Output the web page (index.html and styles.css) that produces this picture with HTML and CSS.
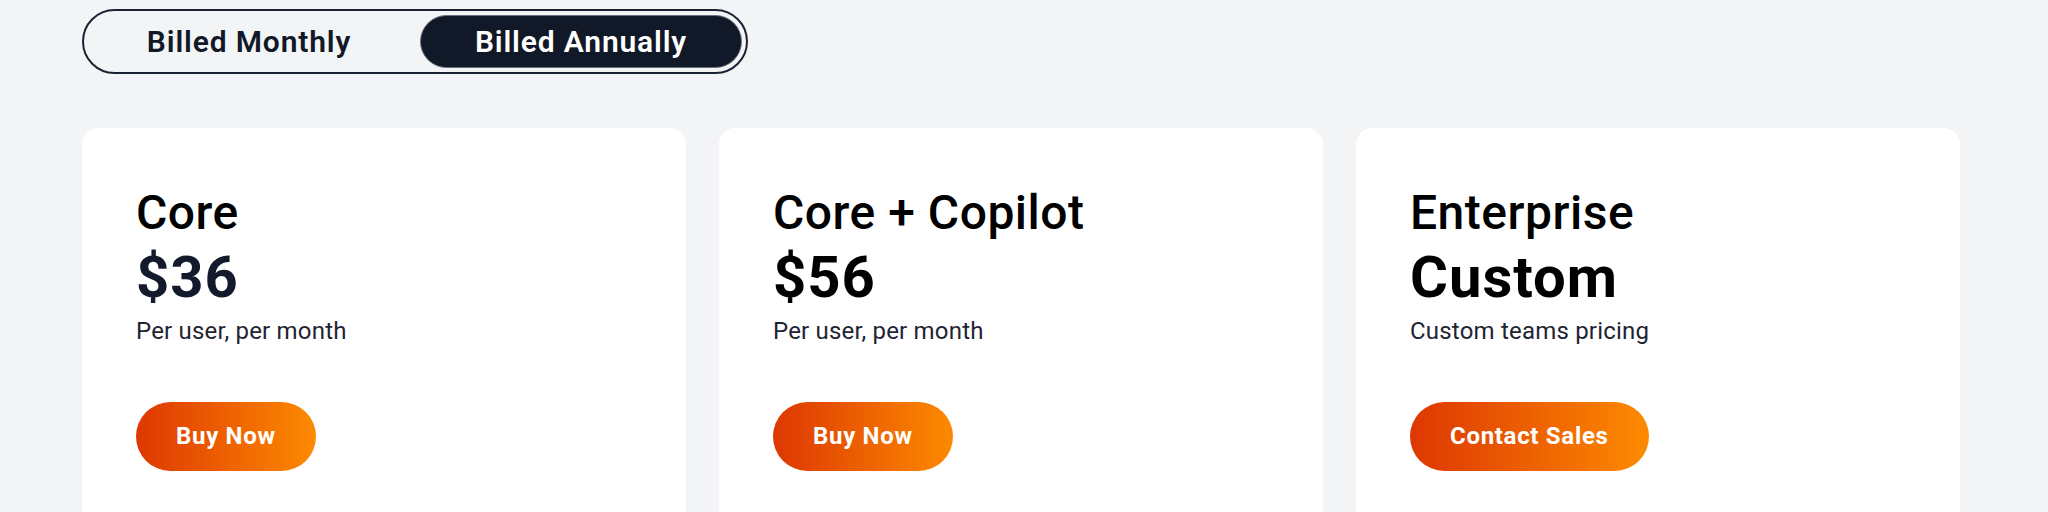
FILE: index.html
```html
<!DOCTYPE html>
<html lang="en">
<head>
<meta charset="utf-8">
<title>Pricing</title>
<link rel="stylesheet" href="styles.css">
</head>
<body>
<main class="page">
  <div class="toggle">
    <button class="toggle-btn">Billed Monthly</button>
    <button class="toggle-btn active">Billed Annually</button>
  </div>
  <section class="cards">
    <article class="card">
      <h2 class="plan">Core</h2>
      <div class="price navy">$36</div>
      <p class="note">Per user, per month</p>
      <a class="cta">Buy Now</a>
    </article>
    <article class="card">
      <h2 class="plan">Core + Copilot</h2>
      <div class="price">$56</div>
      <p class="note">Per user, per month</p>
      <a class="cta">Buy Now</a>
    </article>
    <article class="card">
      <h2 class="plan">Enterprise</h2>
      <div class="price">Custom</div>
      <p class="note">Custom teams pricing</p>
      <a class="cta">Contact Sales</a>
    </article>
  </section>
</main>
</body>
</html>
```
FILE: styles.css
```css
* { box-sizing: border-box; }
html, body {
  margin: 0;
  background: #f3f4f6;
  font-family: Roboto, "Liberation Sans", sans-serif;
  color: #111827;
}
.page {
  padding: 9px 0 0 82px;
}
.toggle {
  display: flex;
  gap: 10px;
  width: 666px;
  padding: 4px;
  border: 2px solid #1a2233;
  border-radius: 999px;
}
.toggle-btn {
  width: 322px;
  height: 53px;
  border: 1px solid transparent;
  border-radius: 999px;
  background: transparent;
  font-family: inherit;
  font-size: 30px;
  font-weight: 600;
  letter-spacing: 0.85px;
  color: #111827;
  padding: 0;
}
.toggle-btn.active {
  background: #111827;
  color: #ffffff;
  border-color: #6b7280;
}
.cards {
  display: grid;
  grid-template-columns: repeat(3, 604px);
  gap: 33px;
  margin-top: 54px;
}
.card {
  background: #ffffff;
  border-radius: 16px;
  padding: 56px 54px 60px;
  height: 420px;
}
.plan {
  margin: 0;
  font-size: 48px;
  line-height: 57.6px;
  font-weight: 500;
  letter-spacing: 0.5px;
  color: #000;
}
.price {
  margin-top: 3px;
  font-size: 58px;
  line-height: 64px;
  font-weight: 700;
  letter-spacing: 1px;
  color: #000;
}
.price.navy { color: #121a2b; }
.note {
  margin: 4px 0 0;
  font-size: 24px;
  line-height: 36px;
  letter-spacing: 0.2px;
  color: #1f2433;
}
.cta {
  display: inline-flex;
  align-items: center;
  height: 69px;
  margin-top: 53px;
  padding: 0 40px;
  border-radius: 999px;
  background: linear-gradient(90deg, #dd3702, #fd8a00);
  color: #fff;
  font-size: 24px;
  font-weight: 700;
  letter-spacing: 0.7px;
}
```
